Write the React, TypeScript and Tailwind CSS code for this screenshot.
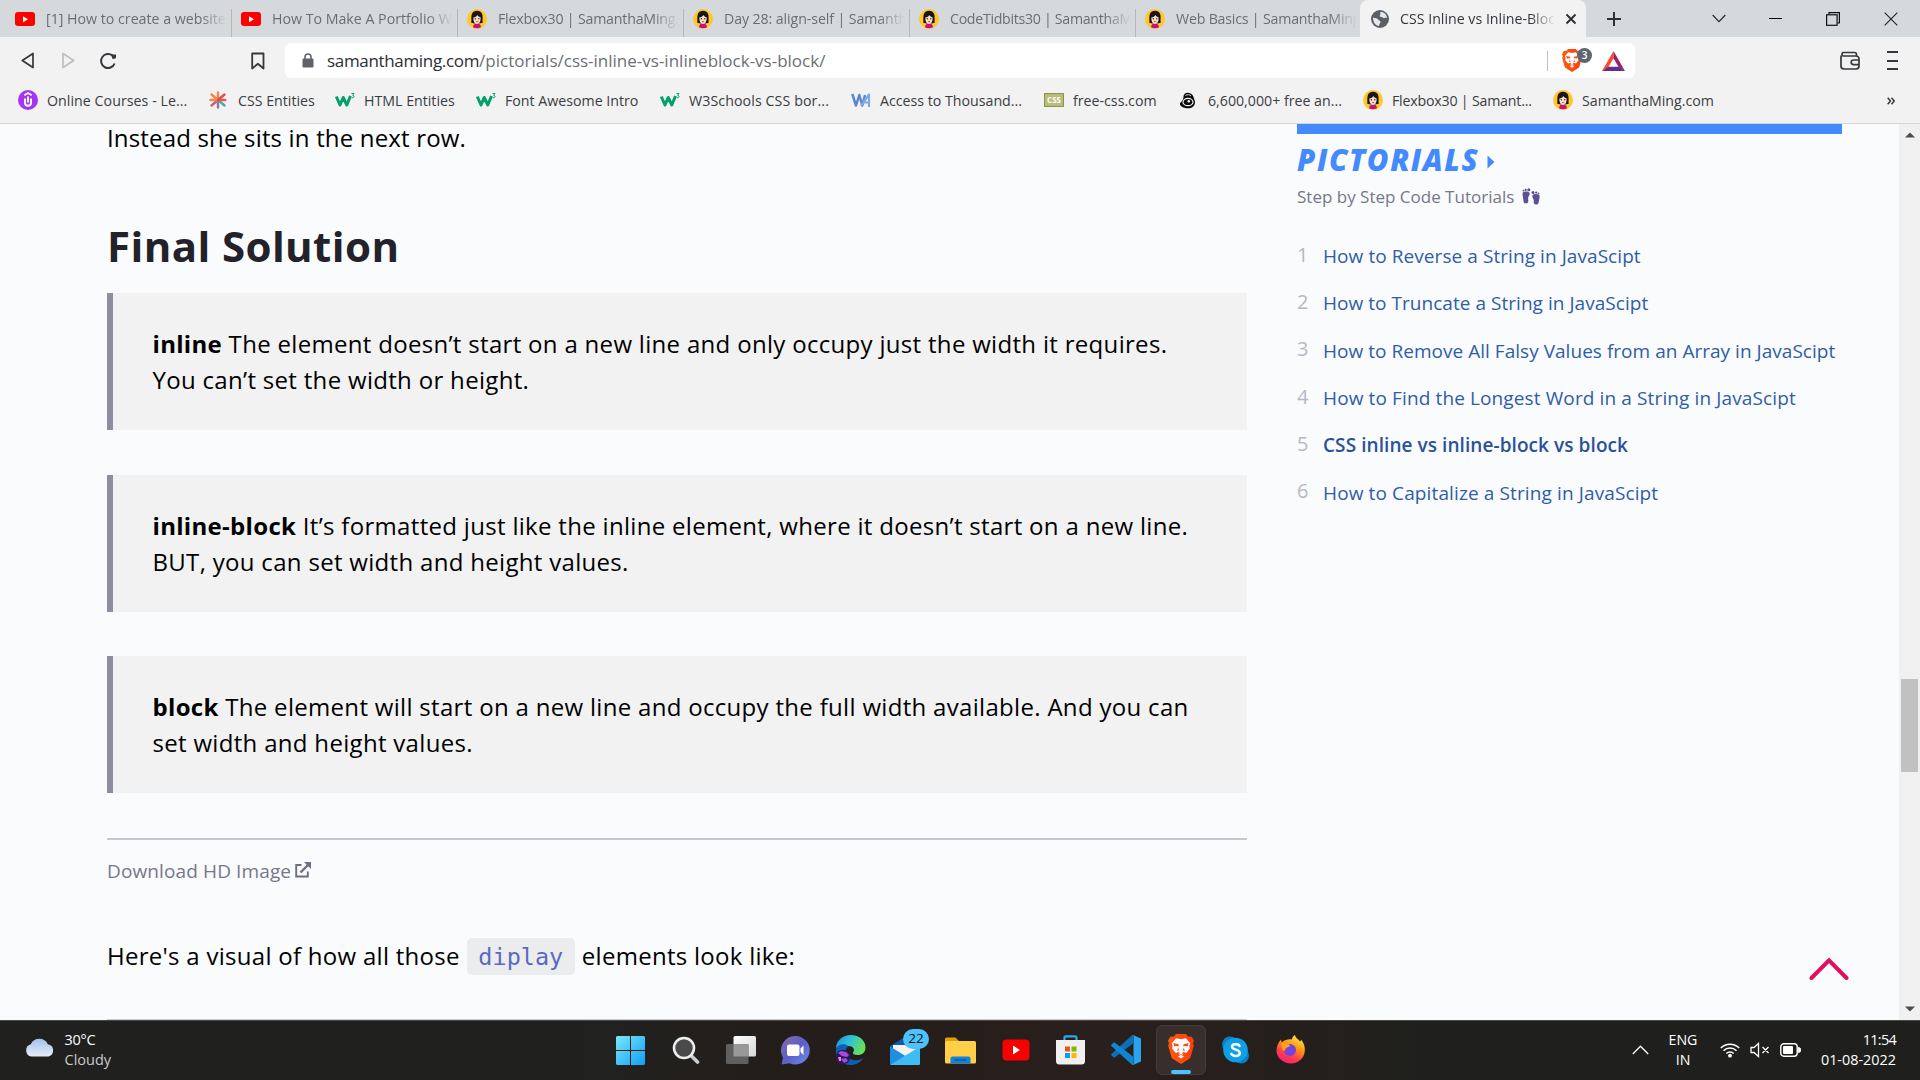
import type { ReactNode } from "react";

/* ---------- small icons ---------- */

const YouTube = () => (
  <svg width="20" height="20" viewBox="0 0 20 20" className="shrink-0">
    <rect x="0" y="3" width="20" height="14" rx="3" fill="#f00" />
    <path d="M8 7.200v6l5-3z" fill="#fff" />
  </svg>
);

const Avatar = () => (
  <svg width="20" height="20" viewBox="0 0 20 20" className="shrink-0">
    <circle cx="10" cy="10" r="10" fill="#fdc82f" />
    <path d="M4.300 13.800C4.600 11 4 8.500 4.600 6 5.300 3 7.500 1.800 10 1.800s4.800 1.200 5.400 4.200c.5 2.500-.1 5 .3 7.800-1.500 1-9.900 1-11.400 0z" fill="#1d1414" />
    <path d="M6 18.200c.3-2.700 1.600-3.700 4-3.700s3.700 1 4 3.700c-2.300 1.400-5.700 1.400-8 0z" fill="#c9107a" />
    <path d="M6.300 8.500c2 0 3.300-1.300 4-2.500.6 1.200 1.800 2.100 3.400 2.500 0 4-1.200 6.300-3.700 6.500-2.500-.2-3.700-2.500-3.700-6.500z" fill="#fbe0cc" />
    <circle cx="8.300" cy="9.800" r=".7" fill="#222" />
    <circle cx="11.800" cy="9.800" r=".7" fill="#222" />
    <path d="M9 12.600h2.200" stroke="#d5303c" strokeWidth=".9" />
  </svg>
);

const Globe = () => (
  <svg width="18" height="18" viewBox="0 0 18 18" className="mx-px shrink-0">
    <circle cx="9" cy="9" r="9" fill="#5b5f66" />
    <path d="M2 7.500c2.500 1 4.500.6 5.200 2 .5 1.300 2.200.9 2.300 2.300 0 1.500-1.300 1.500-1.400 4.200C4.500 15.500 2 12.500 2 7.500zM9.500 2c-1 1.500.9 2-.4 3-1 .8-.2 2 1.100 2 1.500 0 2 1.500 3.300 1 .9-.4 2-.5 2.500.3C16 4.500 13 1.800 9.500 2z" fill="#e6e8ea" />
  </svg>
);

const Udemy = () => (
  <svg width="20" height="20" viewBox="0 0 20 20" className="shrink-0">
    <circle cx="10" cy="10" r="10" fill="#a435f0" />
    <path d="M6.300 5.300 10 3l3.700 2.300M7 8.500v4.300a3 3 0 0 0 6 0V8.500M10 6.500v6" fill="none" stroke="#fff" strokeWidth="1.900" />
  </svg>
);

const Star = () => (
  <svg width="18" height="18" viewBox="0 0 18 18" className="shrink-0 mr-0.5" fill="none" strokeWidth="2.400" strokeLinecap="round">
    <path d="M9 9v7.500" stroke="#8a7a93" />
    <path d="M9 9l-6.500 5.500" stroke="#c65f76" />
    <path d="M9 9l6.500 5.500" stroke="#49aab4" />
    <path d="M9 9h7.300" stroke="#e0604f" />
    <path d="M9 9V1.500M9 9 2.500 3.500M9 9H1.500" stroke="#f3874a" />
    <path d="M9 9l6.500-5.500" stroke="#e5484d" />
  </svg>
);

const W3 = () => (
  <svg width="20" height="20" viewBox="0 0 20 20" className="shrink-0" fill="none">
    <path d="M1.300 6.500 5 15l3.200-7.500L11.800 15l3.700-9" stroke="#04a06a" strokeWidth="3" strokeLinejoin="round" />
    <path d="M16.500 3.500h2.500l-1.300 1.900c2 .1 1.800 2.600-.8 2.300" stroke="#04a06a" strokeWidth="1" />
  </svg>
);

const WA = () => (
  <svg width="20" height="20" viewBox="0 0 20 20" className="shrink-0" fill="none" strokeWidth="2.500" strokeLinejoin="round">
    <path d="M1.300 4 5 15.500 8.300 5l3 10.500L14 5" stroke="#5b86cf" />
    <path d="M10 16 18 4.500V17M13.500 12.500H18" stroke="#7fa9e6" strokeWidth="2.200" />
  </svg>
);

const CssBox = () => (
  <span className="flex h-[14px] w-5 shrink-0 items-center justify-center border border-[#8f9440] bg-[#b9bb7a] text-[8px] font-bold leading-none text-white">
    CSS
  </span>
);

const Eye = () => (
  <svg width="18" height="18" viewBox="0 0 18 18" className="mr-0.5 shrink-0" fill="none">
    <path d="M4.500 5.500C4.500 2 9 .5 12 2.800c3 2.200 2.500 4 3.700 6.700 1.300 4-1.700 7.800-6.700 7.800S.5 14.800 1 12.500c.3-1 1.200-1.500 2-2.500 1-1.200 1.500-3 1.500-4.500z" fill="#0b0b0b" />
    <ellipse cx="9" cy="11" rx="5" ry="3.700" stroke="#f2f2f2" strokeWidth="1.200" />
    <circle cx="9.800" cy="10.300" r="1.300" fill="#f2f2f2" />
    <path d="M6.500 4.500c2-1.200 4-1.200 5.500.5" stroke="#f2f2f2" strokeWidth=".9" />
  </svg>
);

const Lion = ({ w, h, id }: { w: number; h: number; id: string }) => (
  <svg width={w} height={h} viewBox="0 0 26 30" className="shrink-0">
    <defs>
      <linearGradient id={id} x1="0" x2="1">
        <stop offset="0" stopColor="#ff5a0f" />
        <stop offset="1" stopColor="#ff3a0c" />
      </linearGradient>
    </defs>
    <path d="M8 0h10l2.500 2.700 3-.3L26 6.500l-1 2.800.8 2.500-3.600 12.400L13 30l-9.200-5.800L.2 11.800 1 9.300 0 6.500l2.500-4.100 3 .3z" fill={`url(#${id})`} />
    <path d="M8 4.300l5 .9 5-.9 4.300 5.200-1 2.300.6 2.700-3.700 4.500-2.700-1-1.300.9.800 2L13 23l-2-2.100.8-2-1.300-.9-2.700 1-3.700-4.500.6-2.700-1-2.300z" fill="#fff" />
    <path d="M5.500 9l5 1.200.3 2.300-1.300-.5-3.300.3zM20.500 9l-5 1.200-.3 2.300 1.300-.5 3.300.3z" fill="#ff4d10" />
    <path d="M10.200 13.500 11 16.500 9.200 17zM15.800 13.500 15 16.500l1.800.5z" fill="#ff4d10" />
    <path d="M9.500 22.200 13 20.600l3.500 1.600L13 25z" fill="#fff" stroke="#ff4d10" strokeWidth=".8" />
  </svg>
);

/* ---------- tab strip ---------- */

const tabs: { icon: "yt" | "sm"; title: string; tr: string }[] = [
  { icon: "yt", title: "[1] How to create a website in", tr: "" },
  { icon: "yt", title: "How To Make A Portfolio Website", tr: "" },
  { icon: "sm", title: "Flexbox30 | SamanthaMing.com", tr: "tracking-[-0.2px]" },
  { icon: "sm", title: "Day 28: align-self | SamanthaMing", tr: "tracking-[-0.1px]" },
  { icon: "sm", title: "CodeTidbits30 | SamanthaMing", tr: "tracking-[-0.3px]" },
  { icon: "sm", title: "Web Basics | SamanthaMing.com", tr: "tracking-[-0.2px]" },
];

const fade = "[mask-image:linear-gradient(to_right,black_calc(100%-26px),transparent)]";

function TabStrip() {
  return (
    <div className="flex h-[37px] bg-[#d5d9dc] pl-[6px] text-[14.2px]">
      {tabs.map((t) => (
        <div key={t.title} className="flex w-[226px] shrink-0 pt-[9px]">
          <div className="flex h-5 min-w-0 flex-1 items-center pl-[9px] pr-[4px]">
            {t.icon === "yt" ? <YouTube /> : <Avatar />}
            <span className={`ml-[11px] min-w-0 flex-1 overflow-hidden whitespace-nowrap text-[#6a6e73] ${fade} ${t.tr}`}>{t.title}</span>
          </div>
          <span className={t.title.startsWith("Web") ? "w-px" : "w-px bg-[#b4b8bc]"} />
        </div>
      ))}
      <div className="-ml-[2px] flex w-[226px] shrink-0 items-center rounded-t-lg bg-[#f2f2f2] pl-[10px] pr-[9px]">
        <Globe />
        <span className={`ml-[10px] min-w-0 flex-1 overflow-hidden whitespace-nowrap text-[#33373c] ${fade}`}>CSS Inline vs Inline-Block</span>
        <svg width="12" height="12" viewBox="0 0 12 12" className="ml-[9px] shrink-0" stroke="#2d3136" strokeWidth="2">
          <path d="M1.500 1.500l9 9M10.500 1.500l-9 9" />
        </svg>
      </div>
      <svg width="16" height="16" viewBox="0 0 16 16" className="ml-[20px] mt-[11px]" stroke="#2d3136" strokeWidth="2">
        <path d="M8 1v14M1 8h14" />
      </svg>
      <div className="ml-auto flex h-[37px] items-center pr-[22px]">
        <svg width="14" height="9" viewBox="0 0 14 9" className="mr-[43px]" fill="none" stroke="#222" strokeWidth="1.100">
          <path d="M.7 1 7 7.700 13.300 1" />
        </svg>
        <span className="mr-[44px] h-px w-[13px] bg-black" />
        <svg width="14" height="14" viewBox="0 0 14 14" className="mr-[44px]" fill="none" stroke="#111" strokeWidth="1.200">
          <rect x=".6" y="2.800" width="10.500" height="10.500" />
          <path d="M3 2.500V.6h10.400V11H11.500" />
        </svg>
        <svg width="14" height="14" viewBox="0 0 14 14" fill="none" stroke="#222" strokeWidth="1.100">
          <path d="M.7.7l12.600 12.600M13.300.7.7 13.300" />
        </svg>
      </div>
    </div>
  );
}

/* ---------- address bar ---------- */

function Toolbar() {
  return (
    <div className="flex h-12 items-center bg-[#f2f2f2] pb-px">
      <svg width="14" height="17" viewBox="0 0 14 17" className="ml-[21px]" fill="none" stroke="#34383d" strokeWidth="1.700" strokeLinejoin="round">
        <path d="M12 1.500v14L1.300 8.500z" />
      </svg>
      <svg width="14" height="17" viewBox="0 0 14 17" className="ml-[26px]" fill="none" stroke="#bcbec1" strokeWidth="1.700" strokeLinejoin="round">
        <path d="M2 1.500v14l10.700-7z" />
      </svg>
      <svg width="18" height="18" viewBox="0 0 18 18" className="ml-[24px]" fill="none" stroke="#34383d" strokeWidth="2">
        <path d="M15.600 11.500A7 7 0 1 1 13.500 3.600" />
        <path d="M12 2.500h5v3.800l-3.500.6z" fill="#34383d" stroke="none" />
      </svg>
      <svg width="14" height="18" viewBox="0 0 14 18" className="ml-[134px]" fill="none" stroke="#34383d" strokeWidth="1.800" strokeLinejoin="round">
        <path d="M1.200 1.500h11.300v15L6.900 11.800 1.200 16.500z" />
      </svg>
      <div className="ml-[20px] flex h-[35px] w-[1350px] items-center rounded-md bg-white">
        <svg width="12" height="15" viewBox="0 0 12 15" className="ml-[17px]">
          <rect x=".5" y="5.500" width="11" height="9" rx="1.200" fill="#5f6368" />
          <path d="M3 6V4a3 3 0 0 1 6 0v2" fill="none" stroke="#5f6368" strokeWidth="1.600" />
        </svg>
        <div className="ml-[13px] whitespace-nowrap text-[17px] leading-none">
          <span className="tracking-[-0.33px] text-[#2b2e33]">samanthaming.com</span>
          <span className="text-[#6b6f75]">/pictorials/css-inline-vs-inlineblock-vs-block/</span>
        </div>
        <span className="ml-auto h-5 w-px bg-[#bfc1c4]" />
        <div className="ml-[14px] flex w-[32px] items-center">
          <Lion w={20} h={23} id="lionA" />
          <span className="-ml-[5px] -mt-[11px] flex h-[15px] w-[15px] shrink-0 items-center justify-center rounded-full bg-[#60646f] text-[10px] font-semibold leading-none text-white">3</span>
        </div>
        <svg width="23" height="20" viewBox="0 0 24 21" className="ml-[8px] mr-[10px]">
          <path d="M12 0 0 21l6.500-4L12 7.500z" fill="#ff4a23" />
          <path d="M12 0l12 21-6.500-4L12 7.500z" fill="#9e1f63" />
          <path d="M0 21h24l-6.500-4.500h-11z" fill="#662d91" />
        </svg>
      </div>
      <svg width="20" height="20" viewBox="0 0 20 20" className="ml-auto" fill="none" stroke="#34383d" strokeWidth="1.700">
        <path d="M1 4.500V15a3 3 0 0 0 3 3h12a3 3 0 0 0 3-3V8a3 3 0 0 0-3-3H3a2 2 0 0 1 0-3.500h11.500a2 2 0 0 1 2 2V5" />
        <path d="M19 9h-5.500a2.300 2.300 0 0 0 0 4.600H19" />
      </svg>
      <div className="ml-[27px] mr-[22px] flex w-[11px] flex-col gap-[6.500px]">
        <span className="h-[2px] bg-[#34383d]" />
        <span className="h-[2px] bg-[#34383d]" />
        <span className="h-[2px] bg-[#34383d]" />
      </div>
    </div>
  );
}

/* ---------- bookmarks ---------- */

const bookmarks: { icon: ReactNode; label: string; w: string; tr: string }[] = [
  { icon: <Udemy />, label: "Online Courses - Le...", w: "w-[191px]", tr: "tracking-[0.05px]" },
  { icon: <Star />, label: "CSS Entities", w: "w-[126px]", tr: "" },
  { icon: <W3 />, label: "HTML Entities", w: "w-[141px]", tr: "" },
  { icon: <W3 />, label: "Font Awesome Intro", w: "w-[184px]", tr: "" },
  { icon: <W3 />, label: "W3Schools CSS bor...", w: "w-[191px]", tr: "tracking-[0.1px]" },
  { icon: <WA />, label: "Access to Thousand...", w: "w-[193px]", tr: "" },
  { icon: <CssBox />, label: "free-css.com", w: "w-[135px]", tr: "" },
  { icon: <Eye />, label: "6,600,000+ free an...", w: "w-[184px]", tr: "" },
  { icon: <Avatar />, label: "Flexbox30 | Samant...", w: "w-[190px]", tr: "tracking-[-0.2px]" },
  { icon: <Avatar />, label: "SamanthaMing.com", w: "w-[180px]", tr: "" },
];

function Bookmarks() {
  return (
    <div className="flex h-[39px] items-center border-b border-[#d4d6d8] bg-[#f2f2f2] pb-[7px] pl-[18px] text-[14.2px] text-[#3a3d42]">
      {bookmarks.map((b) => (
        <div key={b.label} className={`flex shrink-0 items-center whitespace-nowrap ${b.w}`}>
          {b.icon}
          <span className={`ml-[9px] ${b.tr}`}>{b.label}</span>
        </div>
      ))}
      <svg width="8" height="8" viewBox="0 0 8 8" className="ml-auto mr-[25px]" fill="none" stroke="#34383d" strokeWidth="1.500">
        <path d="M.7.7 3.500 4 .7 7.300M4.500.7 7.300 4 4.500 7.300" />
      </svg>
    </div>
  );
}

/* ---------- page ---------- */

const Note = ({ term, lines }: { term: string; lines: [string, string] }) => (
  <div className="h-[137px] border-l-[6px] border-[#8e8ca0] bg-[#f2f2f2] pl-[39.500px] pt-[33px]">
    <p>
      <b className="font-bold">{term}</b> {lines[0]}
      <br />
      {lines[1]}
    </p>
  </div>
);

function Article() {
  return (
    <main className="flex w-[1140px] shrink-0 flex-col whitespace-nowrap text-[24px] leading-[36px] tracking-[0.31px] text-black">
      <p className="-mt-[4px] tracking-[0.17px]">Instead she sits in the next row.</p>
      <h2 className="mt-[64px] text-[42px] font-bold leading-[52px] tracking-[0.4px] text-[#23222b]">Final Solution</h2>
      <div className="mt-[21px] flex flex-col gap-[44.500px]">
        <Note term="inline" lines={["The element doesn’t start on a new line and only occupy just the width it requires.", "You can’t set the width or height."]} />
        <Note term="inline-block" lines={["It’s formatted just like the inline element, where it doesn’t start on a new line.", "BUT, you can set width and height values."]} />
        <Note term="block" lines={["The element will start on a new line and occupy the full width available. And you can", "set width and height values."]} />
      </div>
      <div className="mt-[45px] h-[2px] shrink-0 bg-[#c8c7d1]" />
      <a className="mt-[17px] flex items-center text-[19px] leading-[28px] tracking-[0.12px] text-[#78768a]">
        Download HD Image
        <svg width="16" height="16" viewBox="0 0 16 16" className="-mt-[2px] ml-[4px]" fill="none" stroke="#6f6d82" strokeWidth="1.900">
          <path d="M6.500 3H1.200v11.500h11.600V9.500" />
          <path d="M5.500 10.500 13 3" strokeWidth="2.400" />
          <path d="M9 0h7v7z" fill="#6f6d82" stroke="none" />
        </svg>
      </a>
      <p className="mt-[53px] flex h-[37px] items-center leading-[34px]">
        <span className="-mt-[2px] tracking-[0.28px]">Here's a visual of how all those</span>
        <code className="ml-[7px] mr-[7px] flex h-[37px] w-[108px] items-center justify-center rounded-[5px] bg-[#ebecee] pt-px font-['DejaVu_Sans_Mono','Liberation_Mono',monospace] text-[23.500px] tracking-normal text-[#5c68c0]">diplay</code>
        <span className="-mt-[2px] tracking-[0.28px]">elements look like:</span>
      </p>
      <div className="mt-[44px] h-[2px] shrink-0 bg-[#c8c7d1]" />
    </main>
  );
}

const pictorials: [string, string][] = [
  ["How to Reverse a String in JavaScipt", "tracking-[0.07px]"],
  ["How to Truncate a String in JavaScipt", "tracking-[0.04px]"],
  ["How to Remove All Falsy Values from an Array in JavaScipt", "tracking-[0.03px]"],
  ["How to Find the Longest Word in a String in JavaScipt", "tracking-[0.12px]"],
  ["CSS inline vs inline-block vs block", "tracking-[0.07px]"],
  ["How to Capitalize a String in JavaScipt", "tracking-[0.12px]"],
];

function Sidebar() {
  return (
    <aside className="ml-[50px] flex w-[545px] flex-col whitespace-nowrap">
      <div className="h-[10px] bg-[#448aff]" />
      <h3 className="mt-[8px] flex items-center text-[29.500px] font-extrabold italic leading-[36px] tracking-[1.550px] text-[#448aff]">
        PICTORIALS
        <svg width="8" height="14" viewBox="0 0 8 14" className="ml-[8px] mt-[3px]">
          <path d="M.5.500 7.500 7 .5 13.500z" fill="#448aff" />
        </svg>
      </h3>
      <p className="mt-[6px] flex items-center text-[17px] leading-[26px] text-[#78768a]">
        Step by Step Code Tutorials
        <svg width="18" height="17" viewBox="0 0 18 17" className="-mt-[1px] ml-[8px]" fill="#5d4f91">
          <path d="M.7 4.500C3 3.200 6 3.300 7.500 4.700c.8 2-.8 3-1.300 5-.3 1.800.6 3.300-.3 4.800-1 1.500-4 1.200-4.300-.8C1.500 11 .2 7.500.7 4.500z" />
          <path d="M17.500 7c-2-1.200-5.500-1.200-7 .2-.8 2 .8 3 1.300 5 .1 1.200-.3 2.200.3 3.500 1 1.300 4 1 4.400-.8.600-2.700 1.300-5.200 1-7.900z" />
          <circle cx="6.800" cy="1.700" r="1.500" />
          <circle cx="3.700" cy="1.900" r="1.100" />
          <circle cx="1.500" cy="2.600" r=".9" />
          <circle cx="11" cy="4.500" r="1.500" />
          <circle cx="14.200" cy="4.600" r="1.100" />
          <circle cx="16.500" cy="5.300" r=".9" />
        </svg>
      </p>
      <ol className="mt-[23px]">
        {pictorials.map(([p, tr], i) => (
          <li key={p} className={`flex h-[47.300px] items-center text-[19px] leading-none ${tr}`}>
            <span className="-mt-[4px] w-[26px] text-[20px] text-[#b9b7c5]">{i + 1}</span>
            <span className={i === 4 ? "font-semibold text-[#2a5298]" : "text-[#2f5da8]"}>{p}</span>
          </li>
        ))}
      </ol>
    </aside>
  );
}

function Page() {
  return (
    <div className="flex h-[896px] overflow-hidden bg-[#fafbfd]">
      <div className="flex min-w-0 flex-1 pl-[107px]">
        <Article />
        <Sidebar />
        <svg width="40" height="24" viewBox="0 0 40 24" className="-ml-[33px] mb-[39px] shrink-0 self-end" fill="none" stroke="#e00f5f" strokeWidth="4" strokeLinecap="round">
          <path d="M2.500 21 20 3.300 37.500 21" />
        </svg>
      </div>
      <div className="flex w-[21px] shrink-0 flex-col items-center bg-[#f0f0f0]">
        <svg width="10" height="6" viewBox="0 0 10 6" className="mt-[8px]">
          <path d="M0 5.500 5 .5l5 5z" fill="#4d4d4d" />
        </svg>
        <span className="mt-[541px] h-[93px] w-[17px] bg-[#c1c1c1]" />
        <svg width="10" height="6" viewBox="0 0 10 6" className="mb-[8px] mt-auto">
          <path d="M0 .5 5 5.500l5-5z" fill="#4d4d4d" />
        </svg>
      </div>
    </div>
  );
}

/* ---------- taskbar ---------- */

const Cell = ({ children, active = false }: { children: ReactNode; active?: boolean }) => (
  <div className="flex w-[55px] shrink-0 justify-center">
    <div className={active ? "flex h-[50px] w-[50px] flex-col items-center rounded-md border border-[#453b38] bg-[#382f2d]" : "flex h-[50px] items-center"}>{children}</div>
  </div>
);

function TaskIcons() {
  return (
    <div className="flex items-center">
      <Cell>
        <svg width="29" height="29" viewBox="0 0 29 29">
          <defs>
            <linearGradient id="win" x1="0" y1="0" x2="1" y2="1">
              <stop offset="0" stopColor="#7be6fb" />
              <stop offset="1" stopColor="#129ef5" />
            </linearGradient>
          </defs>
          <path d="M1 0h13v14H0V1zM15 0h13l1 1v13H15zM0 15h14v14H1l-1-1zM15 15h14v13l-1 1H15z" fill="url(#win)" />
        </svg>
      </Cell>
      <Cell>
        <svg width="28" height="28" viewBox="0 0 28 28" fill="none">
          <path d="M18.500 19 25.500 26" stroke="#c9ccd0" strokeWidth="3.600" strokeLinecap="round" />
          <circle cx="12" cy="12" r="10" fill="#4a4a4a" stroke="#eceef0" strokeWidth="2.600" />
        </svg>
      </Cell>
      <Cell>
        <svg width="30" height="28" viewBox="0 0 30 28">
          <defs>
            <linearGradient id="tv" x1="0" y1="0" x2="1" y2="1">
              <stop offset="0" stopColor="#fff" />
              <stop offset="1" stopColor="#d6d6d6" />
            </linearGradient>
          </defs>
          <rect x="7.500" width="22.500" height="20.500" rx="1.500" fill="url(#tv)" />
          <rect y="8" width="22.500" height="20" rx="1.500" fill="#5f5f5f" />
          <path d="M7.500 8h15v12.500h-15z" fill="#989898" />
        </svg>
      </Cell>
      <Cell>
        <svg width="29" height="29" viewBox="0 0 29 29">
          <defs>
            <linearGradient id="chat" x1="0" y1="0" x2="1" y2="1">
              <stop offset="0" stopColor="#8a6aa8" />
              <stop offset=".5" stopColor="#5b5fc7" />
              <stop offset="1" stopColor="#6e8ff2" />
            </linearGradient>
          </defs>
          <path d="M14.500 0a14.300 14.300 0 1 1-6 27.300L.5 28.500 2 21.500A14.300 14.300 0 0 1 14.500 0z" fill="url(#chat)" />
          <rect x="6" y="8.500" width="12.500" height="11.500" rx="2" fill="#fff" />
          <path d="M19.500 12.500 22.500 9.500v9.500l-3-3z" fill="#fff" />
        </svg>
      </Cell>
      <Cell>
        <svg width="31" height="30" viewBox="0 0 31 30">
          <defs>
            <linearGradient id="edge" x1="0" y1="0" x2="1" y2=".4">
              <stop offset="0" stopColor="#1f8fe0" />
              <stop offset=".5" stopColor="#2ec0d8" />
              <stop offset="1" stopColor="#68e05a" />
            </linearGradient>
          </defs>
          <path d="M1 12C2 5 8 0 15.500 0 25 0 30.500 6 30.500 12.500c0 5-3.500 7.500-8 7.500-3.500 0-5-1.300-4.500-2.500 2.500-3 0-6.500-4.500-6.500C8 11 2 15 1 21z" fill="url(#edge)" />
          <path d="M1 13c3-4 8-5 12.500-2-4 2.500-4 10 2 13 4 2 9 1.500 13-1-3 4.500-7.500 7-13 7C7 30 0 23 1 13z" fill="#0d5fb3" />
          <circle cx="8" cy="22" r="7.300" fill="#31145c" />
          <path d="M3 18l3-2 5 1 3 3-2 2-5-1zM6 24l5-1 2 3-4 2z" fill="#a04ddb" />
          <path d="M3 22h3v4H4z" fill="#e08bd0" />
        </svg>
      </Cell>
      <Cell>
        <div className="flex pl-[8px]">
          <svg width="30" height="28" viewBox="0 0 30 28" className="mt-[1px] shrink-0">
            <path d="M0 9 15 0l15 9v5H0z" fill="#0f5ba8" />
            <path d="M3 8h24v8L15 20 3 14z" fill="#f2f2f2" />
            <path d="M0 9.500 30 28H1.500A1.500 1.500 0 0 1 0 26.500z" fill="#1f8ee0" />
            <path d="M30 9.500 0 28h28.500a1.500 1.500 0 0 0 1.500-1.500z" fill="#3dbdf2" />
          </svg>
          <span className="-ml-[17px] -mt-[7px] flex h-[20px] w-[26px] shrink-0 items-center justify-center rounded-full bg-[#4cc2ff] text-[13.500px] leading-none text-[#111]">22</span>
        </div>
      </Cell>
      <Cell>
        <svg width="31" height="27" viewBox="0 0 31 27" className="mt-[1px]">
          <path d="M0 2a1.500 1.500 0 0 1 1.500-1.500h9L14 4v6H0z" fill="#e0a106" />
          <rect y="4" width="31" height="22.500" rx="1.500" fill="#ffcf48" />
          <path d="M5.500 26.500v-5a2 2 0 0 1 2-2h16a2 2 0 0 1 2 2v5z" fill="#1283d8" />
          <path d="M9.500 23h12" stroke="#0b5597" strokeWidth="1.300" />
        </svg>
      </Cell>
      <Cell>
        <svg width="28" height="22" viewBox="0 0 28 22" className="-mt-px">
          <rect x=".5" y=".5" width="27" height="21" rx="4" fill="#f60000" />
          <path d="M11 6.500v9l7-4.500z" fill="#fff" />
        </svg>
      </Cell>
      <Cell>
        <svg width="29" height="30" viewBox="0 0 29 30">
          <path d="M8.500 6V2.500A1.200 1.200 0 0 1 9.700 1.300h9.600a1.200 1.200 0 0 1 1.200 1.200V6" fill="none" stroke="#2ba8e8" strokeWidth="2.200" />
          <path d="M0 5h29v21a3.500 3.500 0 0 1-3.500 3.500h-22A3.500 3.500 0 0 1 0 26z" fill="#f0f0f0" />
          <path d="M9 11.500h5v5H9z" fill="#f25022" />
          <path d="M15.500 11.500h5v5h-5z" fill="#7fba00" />
          <path d="M9 18h5v5H9z" fill="#00a4ef" />
          <path d="M15.500 18h5v5h-5z" fill="#ffb900" />
        </svg>
      </Cell>
      <Cell>
        <svg width="30" height="30" viewBox="0 0 30 30">
          <path d="M22 0v8.500L4 22.300a1.200 1.200 0 0 1-1.600 0L.6 20.500a1.200 1.200 0 0 1 0-1.800L21 .3z" fill="#0a6fbd" />
          <path d="M22 30v-8.500L4 7.700a1.200 1.200 0 0 0-1.600 0L.6 9.500a1.200 1.200 0 0 0 0 1.800L21 29.700z" fill="#0f86d4" />
          <path d="M22 0 30 3.500v23L22 30l-1-.5c.7.500 1.500 0 1.500-1V1.500c0-1-.8-1.500-1.500-1z" fill="#2ba2ee" />
        </svg>
      </Cell>
      <Cell active>
        <div className="mt-[8px]">
          <Lion w={26} h={30} id="lionB" />
        </div>
        <span className="mt-[6px] h-[4px] w-[20px] shrink-0 rounded-full bg-[#4cc2ff]" />
      </Cell>
      <Cell>
        <svg width="27" height="28" viewBox="0 0 27 28">
          <circle cx="8" cy="8.500" r="8" fill="#0a7fc4" />
          <circle cx="19" cy="19.500" r="8" fill="#0a7fc4" />
          <circle cx="13.500" cy="14" r="12.300" fill="#0f9fe6" />
          <path d="M17.500 10c-1-2.300-7.500-2.500-7.500.8 0 3.500 7.800 2.200 7.800 6.200 0 3.700-7 3.800-8.500.8" fill="none" stroke="#fff" strokeWidth="2.500" strokeLinecap="round" />
        </svg>
      </Cell>
      <Cell>
        <svg width="29" height="29" viewBox="0 0 29 29" className="-mt-px">
          <defs>
            <linearGradient id="ff" x1=".8" y1="0" x2=".3" y2="1">
              <stop offset="0" stopColor="#fff04a" />
              <stop offset=".4" stopColor="#ff980e" />
              <stop offset=".75" stopColor="#ff3750" />
              <stop offset="1" stopColor="#f1247a" />
            </linearGradient>
          </defs>
          <path d="M16 4.500C16 2.500 17.500.8 19 0c.3 3 3.500 4 5 6.500C25 6 25 5 25 4.500c3 3.500 4 7 3.800 11C28.500 23 22.500 28.500 15 28.500S.5 23 .5 15.500C.5 11 2.500 7.500 5 4.500c0 1 .3 2 1 2.700C9 4.500 13 4 16 4.500z" fill="url(#ff)" />
          <circle cx="14" cy="15" r="6" fill="#7542e0" />
          <path d="M6 8c3-.5 6 .5 8 2.500-.5 1.500-3 1.500-4 2.500-.8 1-.6 2.500-2 3-2-1.500-3-5-2-8z" fill="#ffa41c" />
        </svg>
      </Cell>
    </div>
  );
}

function Taskbar() {
  return (
    <div className="flex h-[60px] items-center border-t border-[#4a4b49] bg-[linear-gradient(to_right,#20211f_0,#20211f_30%,#241d1a_42%,#291f1c_58%,#241f1c_68%,#1f201d_74%,#1f201d_100%)] pb-px text-[14.500px] leading-[20px] text-white">
      <div className="flex w-[603px] shrink-0 items-center pl-[25px]">
        <svg width="30" height="20" viewBox="0 0 30 20" className="-mt-[6px]">
          <defs>
            <linearGradient id="cloud" x1="0" y1="0" x2="0" y2="1">
              <stop offset="0" stopColor="#9fbfee" />
              <stop offset="1" stopColor="#e8eef7" />
            </linearGradient>
          </defs>
          <path d="M6.500 19.500A6.300 6.300 0 0 1 5.800 7.200 9.300 9.300 0 0 1 22.800 7.200 6.300 6.300 0 0 1 23.500 19.500z" fill="url(#cloud)" />
        </svg>
        <div className="-mt-px ml-[9.500px]">
          <div className="tracking-[-0.3px]">30°C</div>
          <div className="text-[#c9c9c8]">Cloudy</div>
        </div>
      </div>
      <TaskIcons />
      <div className="ml-auto flex items-center pr-[24px]">
        <svg width="17" height="10" viewBox="0 0 17 10" className="mr-[20px]" fill="none" stroke="#fff" strokeWidth="1.300">
          <path d="M.8 9 8.500 1.200 16.200 9" />
        </svg>
        <div className="-ml-px -mt-px mr-px w-[30px] text-center text-[14.200px]">
          <div>ENG</div>
          <div>IN</div>
        </div>
        <svg width="20" height="16" viewBox="0 0 20 16" className="ml-[21px]" fill="none" stroke="#fff" strokeWidth="1.500">
          <path d="M.8 6a13 13 0 0 1 18.400 0M3.500 8.800a9.200 9.200 0 0 1 13 0M6.300 11.500a5.300 5.300 0 0 1 7.400 0" />
          <circle cx="10" cy="13.700" r="1.900" fill="#fff" stroke="none" />
        </svg>
        <svg width="20" height="16" viewBox="0 0 20 16" className="ml-[10px]" fill="none" stroke="#fff" strokeWidth="1.300">
          <path d="M1 5.500v5h3l4.500 4V1.500L4 5.500zM12.500 5l6 6M18.500 5l-6 6" />
        </svg>
        <svg width="21" height="14" viewBox="0 0 21 14" className="ml-[10px]">
          <rect x=".8" y=".8" width="16.400" height="12.400" rx="3" fill="none" stroke="#fff" strokeWidth="1.400" />
          <rect x="3" y="3" width="10" height="8" rx="1" fill="#fff" />
          <path d="M18.300 4.500a2.500 2.500 0 0 1 0 5z" fill="#fff" stroke="#fff" />
        </svg>
        <div className="-mt-px ml-[19px] w-[76px] text-right text-[14.400px]">
          <div className="tracking-[-0.700px]">11:54</div>
          <div>01-08-2022</div>
        </div>
      </div>
    </div>
  );
}

export default function App() {
  return (
    <div className="flex h-[1080px] w-[1920px] flex-col overflow-hidden font-['Open_Sans','Noto_Sans',sans-serif]">
      <TabStrip />
      <Toolbar />
      <Bookmarks />
      <Page />
      <Taskbar />
    </div>
  );
}
